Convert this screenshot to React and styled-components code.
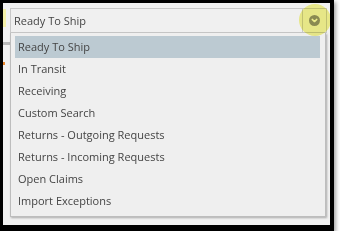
import React from "react";
import styled, { createGlobalStyle } from "styled-components";

const Global = createGlobalStyle`
  html, body { margin: 0; padding: 0; background: #ffffff; }
  body { font-family: "Open Sans", "Liberation Sans", sans-serif; }
`;

const Frame = styled.div`
  box-sizing: border-box;
  width: 334px;
  height: 231px;
  border-style: solid;
  border-color: #000;
  border-width: 3px 4px 6px 3px;
  box-shadow: 2px 2px 4px rgba(0, 0, 0, 0.35);
  background-color: #f1f1f1;
  background-image:
    linear-gradient(#f4f0a8, #f4f0a8),
    linear-gradient(#b9b9b9, #b9b9b9),
    linear-gradient(#e8862c, #e8862c);
  background-repeat: no-repeat;
  background-size: 3px 18px, 7px 3px, 2px 3px;
  background-position: 0 6px, 0 39px, 0 59px;
  padding: 5px 3px 0 7px;
  display: flex;
  flex-direction: column;
`;

const Select = styled.div`
  display: flex;
  flex-direction: column;
`;

const Control = styled.div`
  box-sizing: border-box;
  height: 25px;
  display: flex;
  align-items: stretch;
  border: 1px solid #c9c9c9;
  background: #f0f0f0;
`;

const Value = styled.div`
  flex: 1;
  display: flex;
  align-items: center;
  padding-left: 3px;
  font-size: 11px;
  color: #444;
`;

const Toggle = styled.div`
  position: relative;
  width: 23px;
  display: flex;
  align-items: center;
  justify-content: center;
  border-left: 1px solid #c9c9c9;
`;

const Highlight = styled.span`
  position: absolute;
  left: 50%;
  top: 50%;
  width: 32px;
  height: 32px;
  margin: -17px 0 0 -16px;
  border-radius: 50%;
  background: #f5f590;
  mix-blend-mode: multiply;
  pointer-events: none;
`;

const List = styled.ul`
  box-sizing: border-box;
  list-style: none;
  margin: 0 1px 0 0;
  padding: 3px 5px 4px 4px;
  border: 1px solid #bdbdbd;
  border-top: none;
  background: #efefef;
  box-shadow: 1px 1px 2px rgba(0, 0, 0, 0.3);
`;

const Item = styled.li`
  height: 22px;
  line-height: 22px;
  padding-left: 3px;
  font-size: 11px;
  color: #444;
  background: ${(p) => (p.$active ? "#bccad2" : "transparent")};
  white-space: nowrap;
`;

const items = [
  "Ready To Ship",
  "In Transit",
  "Receiving",
  "Custom Search",
  "Returns - Outgoing Requests",
  "Returns - Incoming Requests",
  "Open Claims",
  "Import Exceptions",
];

function ChevronCircle() {
  return (
    <svg width="11" height="11" viewBox="0 0 12 12" aria-hidden="true">
      <circle cx="6" cy="6" r="6" fill="#909090" />
      <path d="M3.5 4.8 L6 7.2 L8.5 4.8" fill="none" stroke="#f6f6f6" strokeWidth="1.6" strokeLinecap="round" strokeLinejoin="round" />
    </svg>
  );
}

export default function App() {
  return (
    <>
      <Global />
      <Frame>
        <Select>
          <Control>
            <Value>Ready To Ship</Value>
            <Toggle>
              <ChevronCircle />
              <Highlight />
            </Toggle>
          </Control>
          <List>
            {items.map((t, i) => (
              <Item key={t} $active={i === 0}>
                {t}
              </Item>
            ))}
          </List>
        </Select>
      </Frame>
    </>
  );
}
